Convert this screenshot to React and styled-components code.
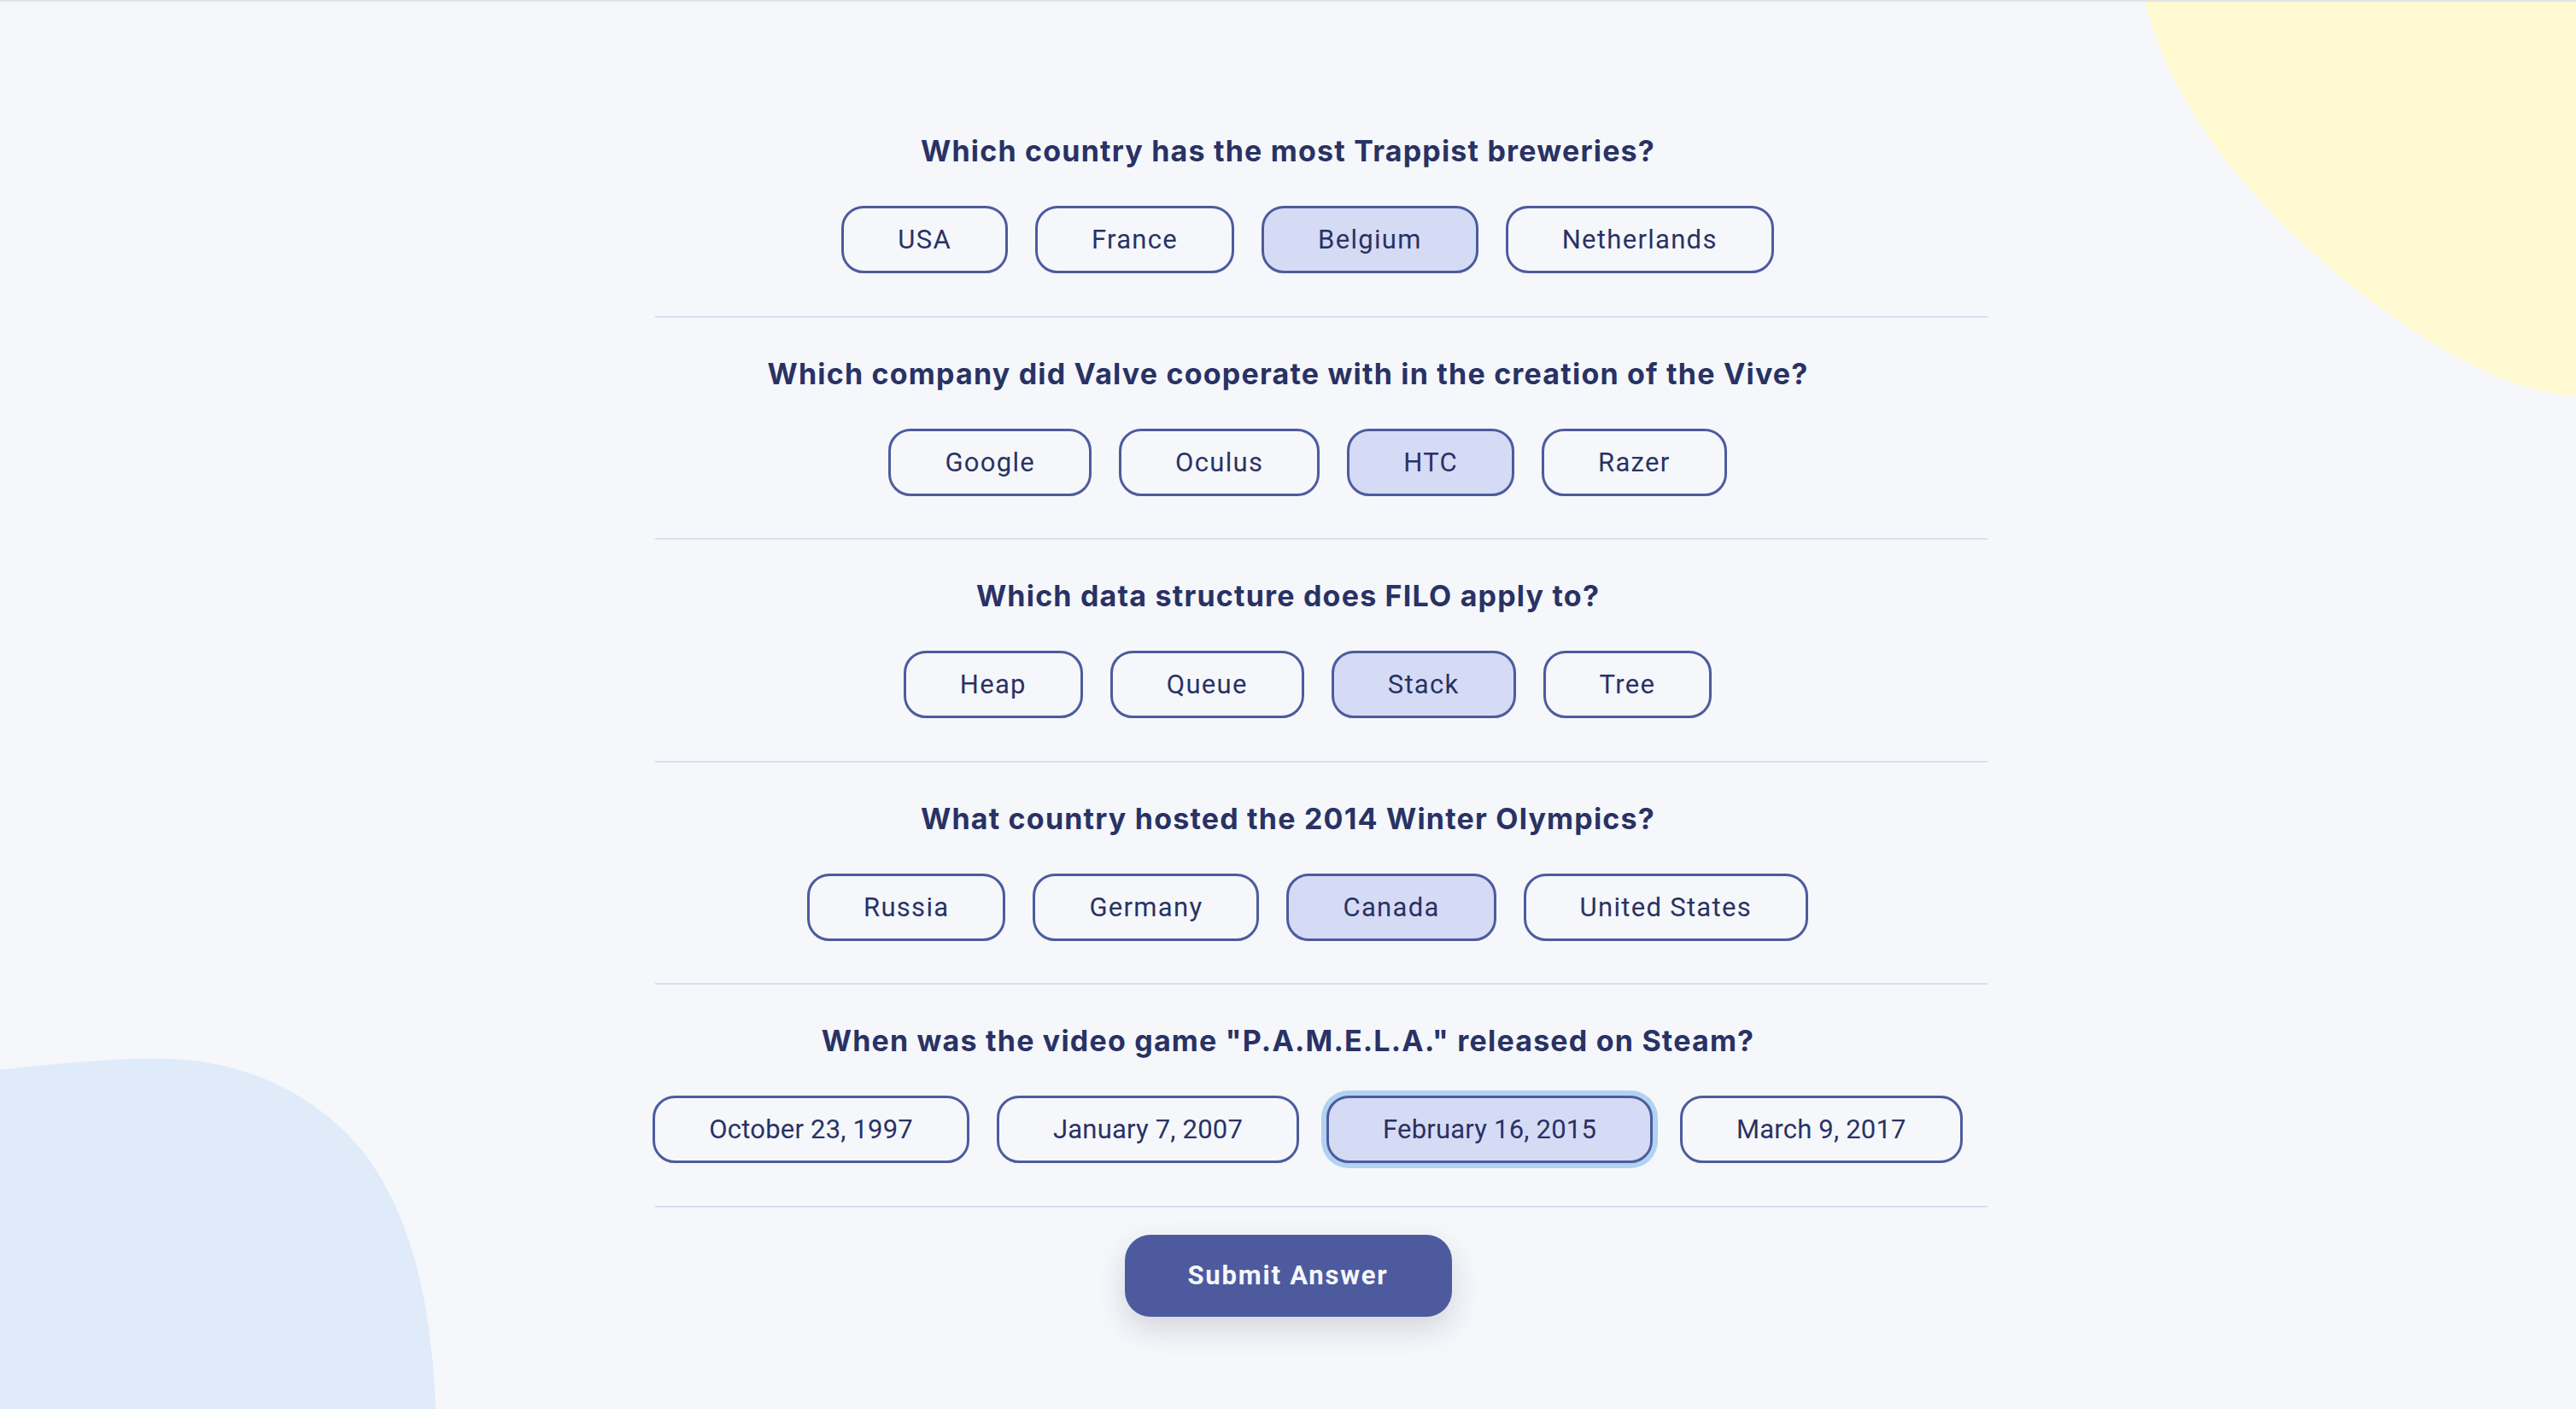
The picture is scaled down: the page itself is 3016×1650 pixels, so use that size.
import React, { useState } from 'react';
import styled, { createGlobalStyle } from 'styled-components';

const GlobalStyle = createGlobalStyle`
  html, body {
    margin: 0;
    padding: 0;
    background: #f5f7fb;
  }
  * {
    box-sizing: border-box;
  }
`;

const Page = styled.div`
  position: relative;
  min-height: 1650px;
  overflow: hidden;
  border-top: 2px solid #e1e2e4;
  padding: 109px 0 0 78px;
  font-family: Roboto, "Open Sans", sans-serif;
  color: #293264;
`;

const Blob = styled.svg`
  position: absolute;
  z-index: 0;
  pointer-events: none;
  ${(p) => (p.$corner === 'top' ? 'top: 0; right: 0;' : 'bottom: 0; left: 0;')}
`;

const Quiz = styled.div`
  position: relative;
  z-index: 1;
  width: 1560px;
  margin: 0 auto;
  display: flex;
  flex-direction: column;
`;

const Section = styled.section`
  padding: 44px 0 49.5px;
  border-bottom: 2px solid #dbdef0;
  display: flex;
  flex-direction: column;
  gap: 43px;
`;

const Question = styled.h2`
  margin: 0;
  padding-right: 78px;
  text-align: center;
  font-family: Inter, Roboto, sans-serif;
  font-size: 34px;
  line-height: 43px;
  font-weight: 700;
  letter-spacing: 1.2px;
`;

const Answers = styled.div`
  display: flex;
  justify-content: center;
`;

const Answer = styled.button`
  flex-shrink: 0;
  height: 79px;
  margin-right: 32px;
  padding: 0 63px;
  display: inline-flex;
  align-items: center;
  justify-content: center;
  white-space: nowrap;
  border: 3px solid #4d5b9e;
  border-radius: 26px;
  background: ${(p) => (p.$selected ? '#d6dbf5' : 'transparent')};
  box-shadow: ${(p) => (p.$focused ? '0 0 0 6px #b2d2f1' : 'none')};
  font-family: Roboto, "Open Sans", sans-serif;
  font-size: 31px;
  color: #293264;
  letter-spacing: ${(p) => (p.$tight ? '0.2px' : '1.3px')};
  cursor: pointer;
`;

const Footer = styled.div`
  display: flex;
  justify-content: center;
  padding: 32px 78px 0 0;
`;

const Submit = styled.button`
  width: 383px;
  height: 96px;
  border: none;
  border-radius: 30px;
  background: #4d5b9e;
  color: #f5f7fb;
  font-family: Roboto, "Open Sans", sans-serif;
  font-size: 31px;
  font-weight: 700;
  letter-spacing: 1.8px;
  box-shadow: 0 14px 34px rgba(40, 44, 60, 0.16);
  cursor: pointer;
`;

const questions = [
  {
    q: 'Which country has the most Trappist breweries?',
    answers: ['USA', 'France', 'Belgium', 'Netherlands'],
  },
  {
    q: 'Which company did Valve cooperate with in the creation of the Vive?',
    answers: ['Google', 'Oculus', 'HTC', 'Razer'],
  },
  {
    q: 'Which data structure does FILO apply to?',
    answers: ['Heap', 'Queue', 'Stack', 'Tree'],
  },
  {
    q: 'What country hosted the 2014 Winter Olympics?',
    answers: ['Russia', 'Germany', 'Canada', 'United States'],
  },
  {
    q: 'When was the video game "P.A.M.E.L.A." released on Steam?',
    answers: ['October 23, 1997', 'January 7, 2007', 'February 16, 2015', 'March 9, 2017'],
  },
];

export default function App() {
  const [picked, setPicked] = useState([2, 2, 2, 2, 2]);
  const last = questions.length - 1;

  const pick = (qi, ai) => {
    setPicked((prev) => prev.map((v, i) => (i === qi ? ai : v)));
  };

  return (
    <>
      <GlobalStyle />
      <Page>
        <Blob $corner="top" width="536" height="480" viewBox="0 0 536 480">
          <path d="M31 -2 C60 120 150 230 260 322 C360 402 450 456 536 462 L536 -2 Z" fill="#fffad1" />
        </Blob>
        <Blob $corner="bottom" width="520" height="420" viewBox="0 0 520 420">
          <path d="M0 23 C80 14 150 8 200 10 C300 14 380 60 430 125 C480 195 505 290 510 420 L0 420 Z" fill="#dfebf8" />
        </Blob>
        <Quiz>
          {questions.map((item, qi) => (
            <Section key={item.q}>
              <Question>{item.q}</Question>
              <Answers>
                {item.answers.map((a, ai) => (
                  <Answer
                    key={a}
                    $selected={picked[qi] === ai}
                    $focused={qi === last && picked[qi] === ai}
                    $tight={/\d/.test(a)}
                    onClick={() => pick(qi, ai)}
                  >
                    {a}
                  </Answer>
                ))}
              </Answers>
            </Section>
          ))}
          <Footer>
            <Submit>Submit Answer</Submit>
          </Footer>
        </Quiz>
      </Page>
    </>
  );
}
